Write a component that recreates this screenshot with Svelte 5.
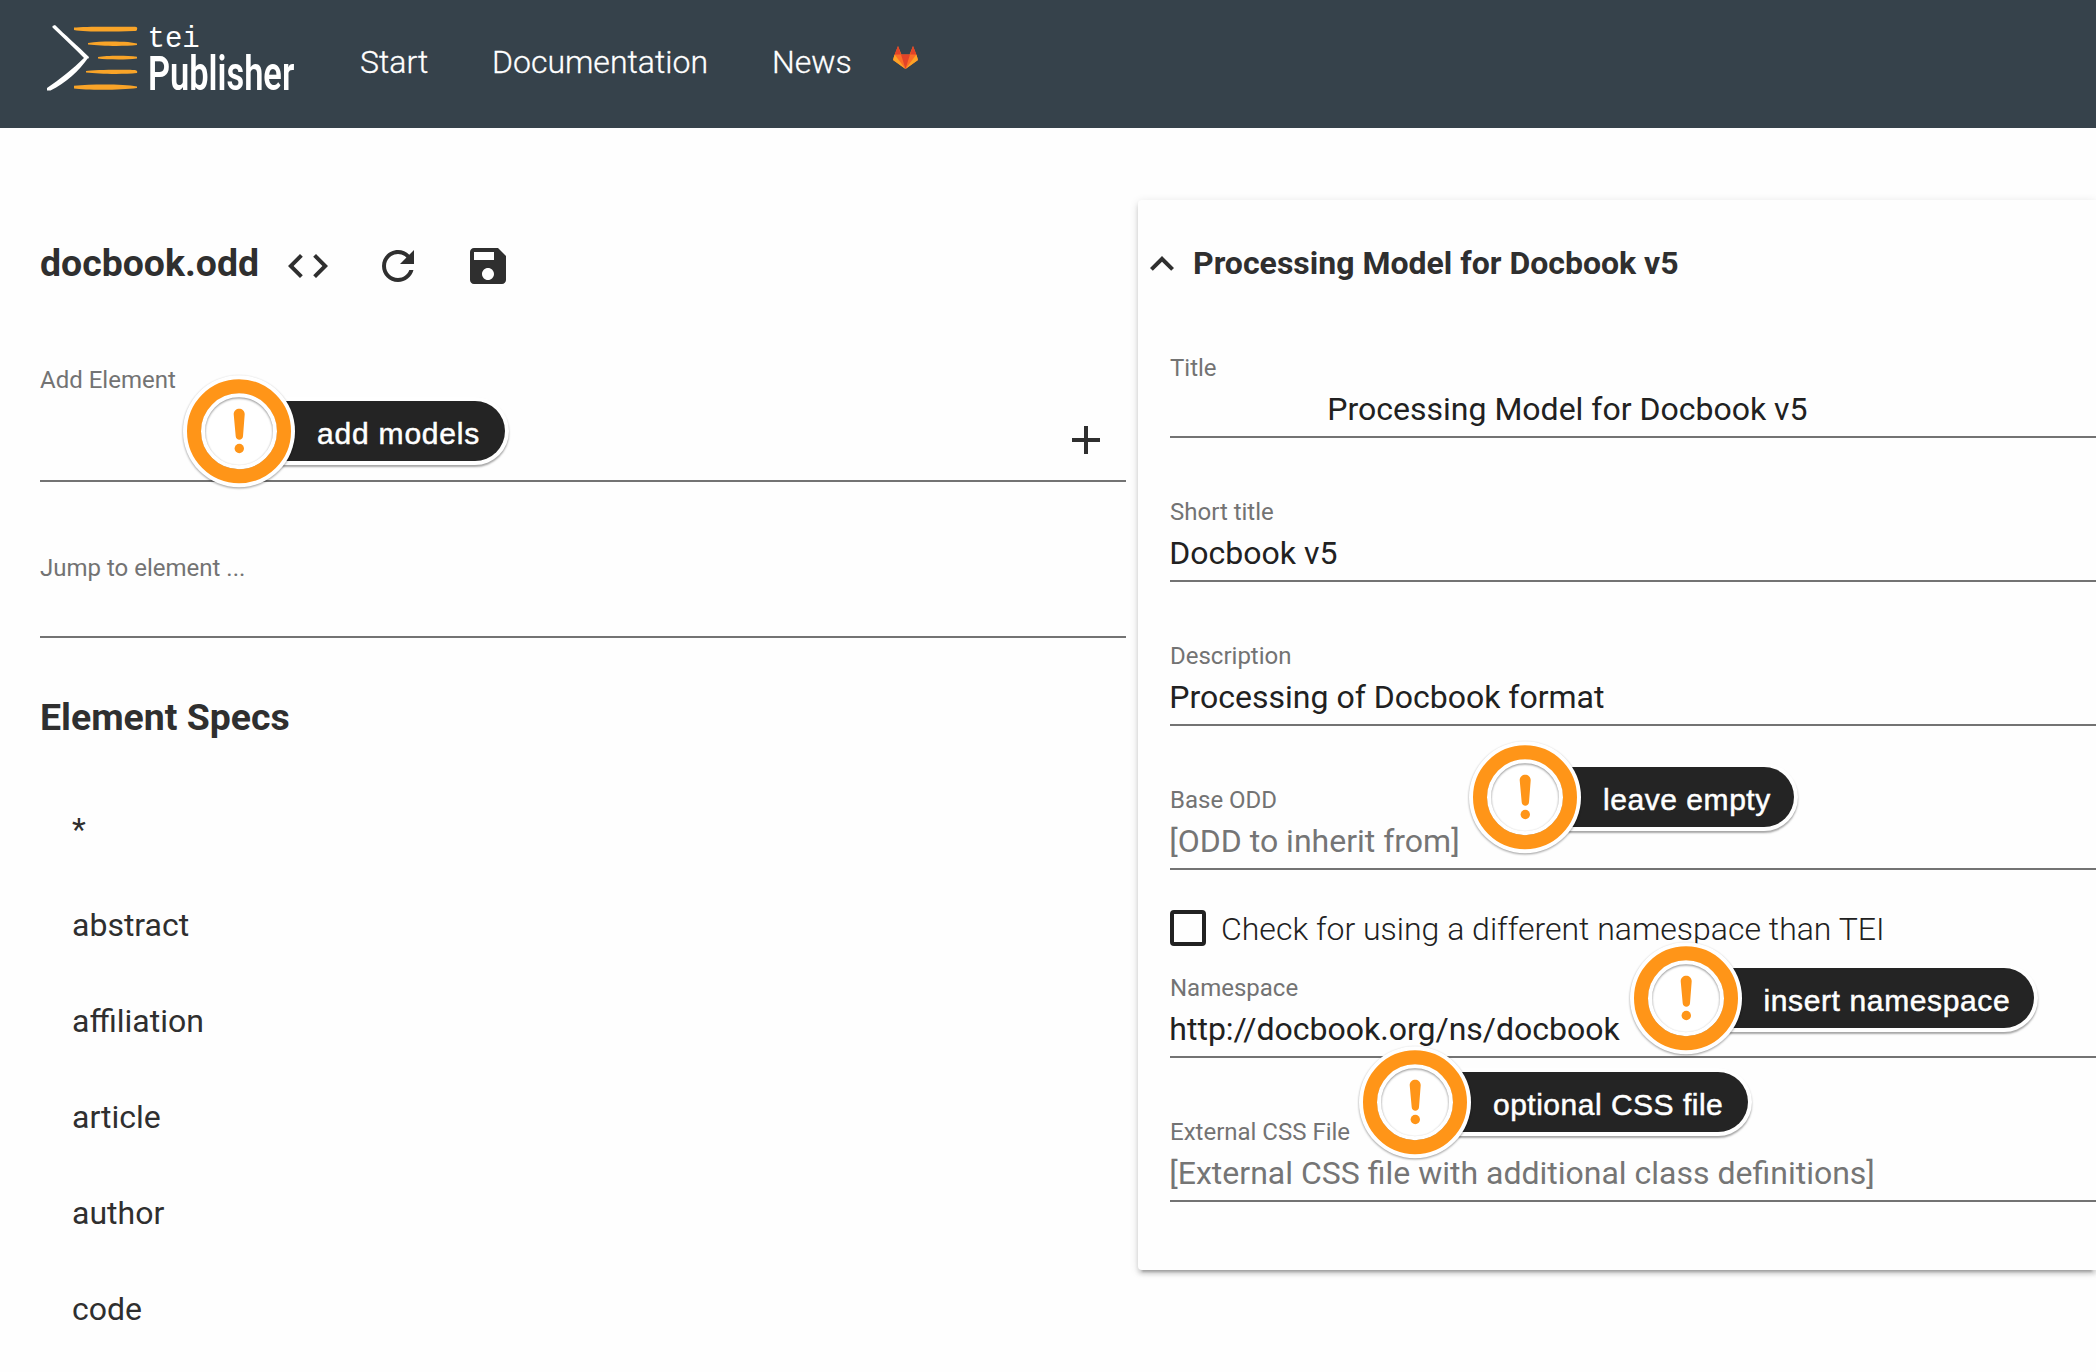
<script>
  const specs = ['*', 'abstract', 'affiliation', 'article', 'author', 'code'];
  const fields = [
    { label: 'Title', value: 'Processing Model for Docbook v5', indent: true },
    { label: 'Short title', value: 'Docbook v5' },
    { label: 'Description', value: 'Processing of Docbook format' },
    { label: 'Base ODD', placeholder: '[ODD to inherit from]' }
  ];
  const tailFields = [
    { label: 'Namespace', value: 'http://docbook.org/ns/docbook' },
    { label: 'External CSS File', placeholder: '[External CSS file with additional class definitions]' }
  ];
  const callouts = [
    { text: 'add models', x: 239, y: 431, w: 266, spacing: 0.8 },
    { text: 'leave empty', x: 1525, y: 797, w: 269, spacing: 0.55 },
    { text: 'insert namespace', x: 1685.5, y: 998, w: 348.5, spacing: 0.62 },
    { text: 'optional CSS file', x: 1415, y: 1102, w: 333, spacing: 0.5 }
  ];
</script>

{#snippet field(f)}
  <div class="field">
    <div class="label">{f.label}</div>
    <div class="input" class:indent={f.indent} class:placeholder={f.placeholder}>{f.value ?? f.placeholder}</div>
  </div>
{/snippet}

<div class="page">
  <header>
    <div class="logo">
      <svg class="mark" width="92" height="68" viewBox="0 0 92 68">
        <path d="M5.500 2 L8 1 C18 11 31 22 42 33 L41.500 34.500 L37.500 34.500 C27 23.500 16 13.500 5.500 3.500Z M37.500 33.500 L41 34 C32 47 19 59 3.500 66.500 L0 66.500 L0 64 C13 55.500 25 45.500 37.500 33.500Z" fill="#fff" />
        <g fill="#f9a428">
          <path d="M27 3.500 C36 2.500 60 2.500 88 2.800 Q91 3 90 5.500 Q90 7 87 7 C64 7.800 38 8 27 6Z" />
          <path d="M41 19 C54 17 70 17.500 81 18 L90 19.500 L90 21 C76 22.500 54 22 41 20.500Z" />
          <path d="M51 33 C60 31.500 80 31.500 90 32.800 L90 34.500 C78 36 60 35.500 51 34.500Z" />
          <path d="M39 47 C46 45.500 80 45.500 88 46 Q91 46.500 90 49 C76 50.500 52 50 39 48.500Z" />
          <path d="M27 61.800 C46 60 76 60 90 62.500 L90 64 C72 66.500 38 66 27 64.500Z" />
        </g>
      </svg>
      <div class="words">
        <span class="tei">tei</span>
        <span class="publisher">Publisher</span>
      </div>
    </div>
    <nav>
      <span class="start">Start</span>
      <span class="documentation">Documentation</span>
      <span class="news">News</span>
      <svg width="25" height="24" viewBox="0 0 25 24">
        <path d="M12.500 23 L0 14 L1.500 9 L5 0 L8.500 8.500 H16.500 L20 0 L23.500 9 L25 14Z" fill="#fc6d26" />
        <path d="M12.500 23 L0.300 14.300 Q0 13.500 .3 12.800 L1.600 8.500Z M12.500 23 L24.700 14.300 Q25 13.500 24.700 12.800 L23.400 8.500Z" fill="#fca326" />
        <path d="M12.500 23 L8 8.500 H17Z M1.600 8.500 L5 0 L8 8.500Z M23.400 8.500 L20 0 L17 8.500Z" fill="#e24329" />
      </svg>
    </nav>
  </header>

  <main>
    <section class="left">
      <div class="titlebar">
        <h2>docbook.odd</h2>
        <div class="actions">
          <svg viewBox="0 0 24 24"><path d="M9.400 16.600L4.800 12l4.600-4.600L8 6l-6 6 6 6 1.400-1.400zm5.200 0l4.600-4.600-4.600-4.600L16 6l6 6-6 6-1.400-1.400z" /></svg>
          <svg viewBox="0 0 24 24"><path d="M17.650 6.350C16.200 4.900 14.210 4 12 4c-4.420 0-7.990 3.580-7.990 8s3.570 8 7.990 8c3.730 0 6.840-2.550 7.730-6h-2.080c-.82 2.330-3.040 4-5.650 4-3.310 0-6-2.690-6-6s2.690-6 6-6c1.660 0 3.140.69 4.220 1.780L13 11h7V4l-2.350 2.350z" /></svg>
          <svg viewBox="0 0 24 24"><path d="M17 3H5c-1.110 0-2 .9-2 2v14c0 1.100.89 2 2 2h14c1.100 0 2-.9 2-2V7l-4-4zm-5 16c-1.660 0-3-1.340-3-3s1.340-3 3-3 3 1.340 3 3-1.340 3-3 3zm3-10H5V5h10v4z" /></svg>
        </div>
      </div>
      <div class="combo add">
        <div class="label">Add Element</div>
        <div class="slot">
          <svg viewBox="0 0 24 24"><path d="M19 13h-6v6h-2v-6H5v-2h6V5h2v6h6v2z" /></svg>
        </div>
      </div>
      <div class="combo jump">
        <div class="label">Jump to element ...</div>
        <div class="slot"></div>
      </div>
      <h2 class="specs-title">Element Specs</h2>
      <ul>
        {#each specs as s}
          <li>{s}</li>
        {/each}
      </ul>
    </section>

    <section class="card">
      <div class="card-head">
        <svg viewBox="0 0 24 24"><path d="M12 8l-6 6 1.410 1.410L12 10.830l4.590 4.580L18 14z" /></svg>
        <h3>Processing Model for Docbook v5</h3>
      </div>
      <div class="form">
        {#each fields as f}
          {@render field(f)}
        {/each}
        <div class="check">
          <span class="box"></span>
          <span class="check-text">Check for using a different namespace than TEI</span>
        </div>
        {#each tailFields as f}
          {@render field(f)}
        {/each}
      </div>
    </section>
  </main>

  {#each callouts as c}
    <div class="callout" style="left:{c.x}px; top:{c.y}px; width:{c.w}px; letter-spacing:{c.spacing}px">
      <div class="pill">{c.text}</div>
      <svg class="badge" width="124" height="124" viewBox="-62 -62.250 124 124">
        <circle class="disc" r="56" />
        <circle class="ring" r="36" />
        <circle r="45" fill="none" stroke="#ff9518" stroke-width="14" />
        <path d="M-5.300 -17 C-5.300 -24.500 5.700 -24.500 5.700 -17 L4 5 C3.700 9.500 -3 9.500 -3.300 5Z" fill="#ff9518" />
        <circle cx="0.300" cy="17.300" r="4.700" fill="#ff9518" />
      </svg>
    </div>
  {/each}
</div>

<style>
  :global(body) {
    background: #fefefe;
    overflow: hidden;
  }
  .page {
    position: relative;
    width: 2096px;
    height: 1372px;
    overflow: hidden;
    font-family: Roboto, sans-serif;
    font-size: 32px;
    color: #2f2f2f;
    background: #fefefe;
  }
  h2, h3, ul {
    margin: 0;
    padding: 0;
  }
  header {
    display: flex;
    height: 128px;
    box-sizing: border-box;
    padding-left: 47px;
    background: #36424b;
    color: #fff;
  }
  .logo {
    display: flex;
    width: 313px;
    padding-top: 24px;
    gap: 8.500px;
  }
  .words {
    display: flex;
    flex-direction: column;
  }
  .tei {
    font: 29px/32px "Liberation Mono", monospace;
    height: 24px;
  }
  .publisher {
    font-size: 49px;
    font-weight: 600;
    line-height: 58px;
    margin-top: -3px;
    transform: scaleX(0.702);
    transform-origin: 0 0;
  }
  nav {
    display: flex;
    font-weight: 300;
    font-size: 32px;
    line-height: 124px;
    -webkit-text-stroke: 0.300px #fff;
  }
  .start { width: 132px; }
  .documentation { width: 280px; }
  .news { width: 121px; }
  nav svg { margin-top: 46px; }

  main {
    display: flex;
    gap: 12px;
    padding-left: 40px;
  }
  .left {
    width: 1086px;
  }
  .titlebar {
    display: flex;
    align-items: flex-start;
    padding-top: 114px;
    height: 62px;
  }
  h2 {
    font-size: 37.440px;
    line-height: 43px;
    font-weight: 700;
  }
  .titlebar h2 {
    width: 244px;
  }
  .actions {
    display: flex;
    gap: 42px;
  }
  .actions svg, .slot svg, .card-head svg {
    width: 48px;
    height: 48px;
    fill: #2f2f2f;
    flex: none;
  }
  .label {
    font-size: 24px;
    line-height: 40px;
    height: 40px;
    color: #737373;
  }
  .combo {
    border-bottom: 2px solid #737373;
  }
  .add {
    margin-top: 56px;
  }
  .slot {
    display: flex;
    justify-content: flex-end;
    padding: 16px 16px 0 0;
    box-sizing: border-box;
  }
  .add .slot { height: 80px; }
  .jump { margin-top: 66px; }
  .jump .slot { height: 48px; }
  .specs-title { margin-top: 58px; }
  ul {
    list-style: none;
    margin-top: 42px;
  }
  li {
    height: 96px;
    line-height: 96px;
    padding-left: 32px;
  }
  .card {
    flex: 1;
    height: 1070px;
    margin-top: 72px;
    border-radius: 4px 0 0 4px;
    background: #fefefe;
    box-shadow: 0 4px 4px rgba(0, 0, 0, 0.140), 0 2px 10px rgba(0, 0, 0, 0.120), 0 6px 2px -4px rgba(0, 0, 0, 0.200);
  }
  .card-head {
    display: flex;
    padding-top: 40px;
    height: 108px;
    gap: 7px;
  }
  h3 {
    font-size: 32px;
    line-height: 46px;
    font-weight: 700;
  }
  .form {
    padding-left: 32px;
  }
  .field {
    height: 144px;
  }
  .input {
    height: 48px;
    line-height: 42px;
    border-bottom: 2px solid #737373;
    color: #212121;
    text-indent: -0.700px;
    white-space: nowrap;
  }
  .input.indent { padding-left: 158px; }
  .input.placeholder { color: #757575; }
  .check {
    display: flex;
    height: 44px;
    margin-top: -14px;
    padding-bottom: 14px;
    gap: 15px;
  }
  .box {
    width: 28px;
    height: 28px;
    border: 4px solid #212121;
    border-radius: 4px;
  }
  .check-text {
    font-weight: 300;
    line-height: 38px;
    color: #212121;
  }

  .callout {
    position: absolute;
  }
  .pill {
    height: 60px;
    margin-top: -30px;
    box-sizing: border-box;
    border-radius: 0 30px 30px 0;
    padding-left: 78px;
    font: 30px/66px "Liberation Sans", sans-serif;
    -webkit-text-stroke: 0.500px #fff;
    color: #fff;
    white-space: nowrap;
    background: #242424;
    box-shadow: 0 0 0 4px #fff, 0 2px 2px 4px rgba(0, 0, 0, 0.350);
  }
  .badge {
    position: absolute;
    left: -62px;
    top: -62px;
  }
  .disc {
    fill: #fff;
    filter: drop-shadow(0 1.500px 1.200px rgba(0, 0, 0, 0.400));
  }
  .ring {
    fill: none;
    stroke: #fff;
    stroke-width: 4px;
    filter: drop-shadow(0 1.500px 1px rgba(0, 0, 0, 0.450));
  }
</style>
